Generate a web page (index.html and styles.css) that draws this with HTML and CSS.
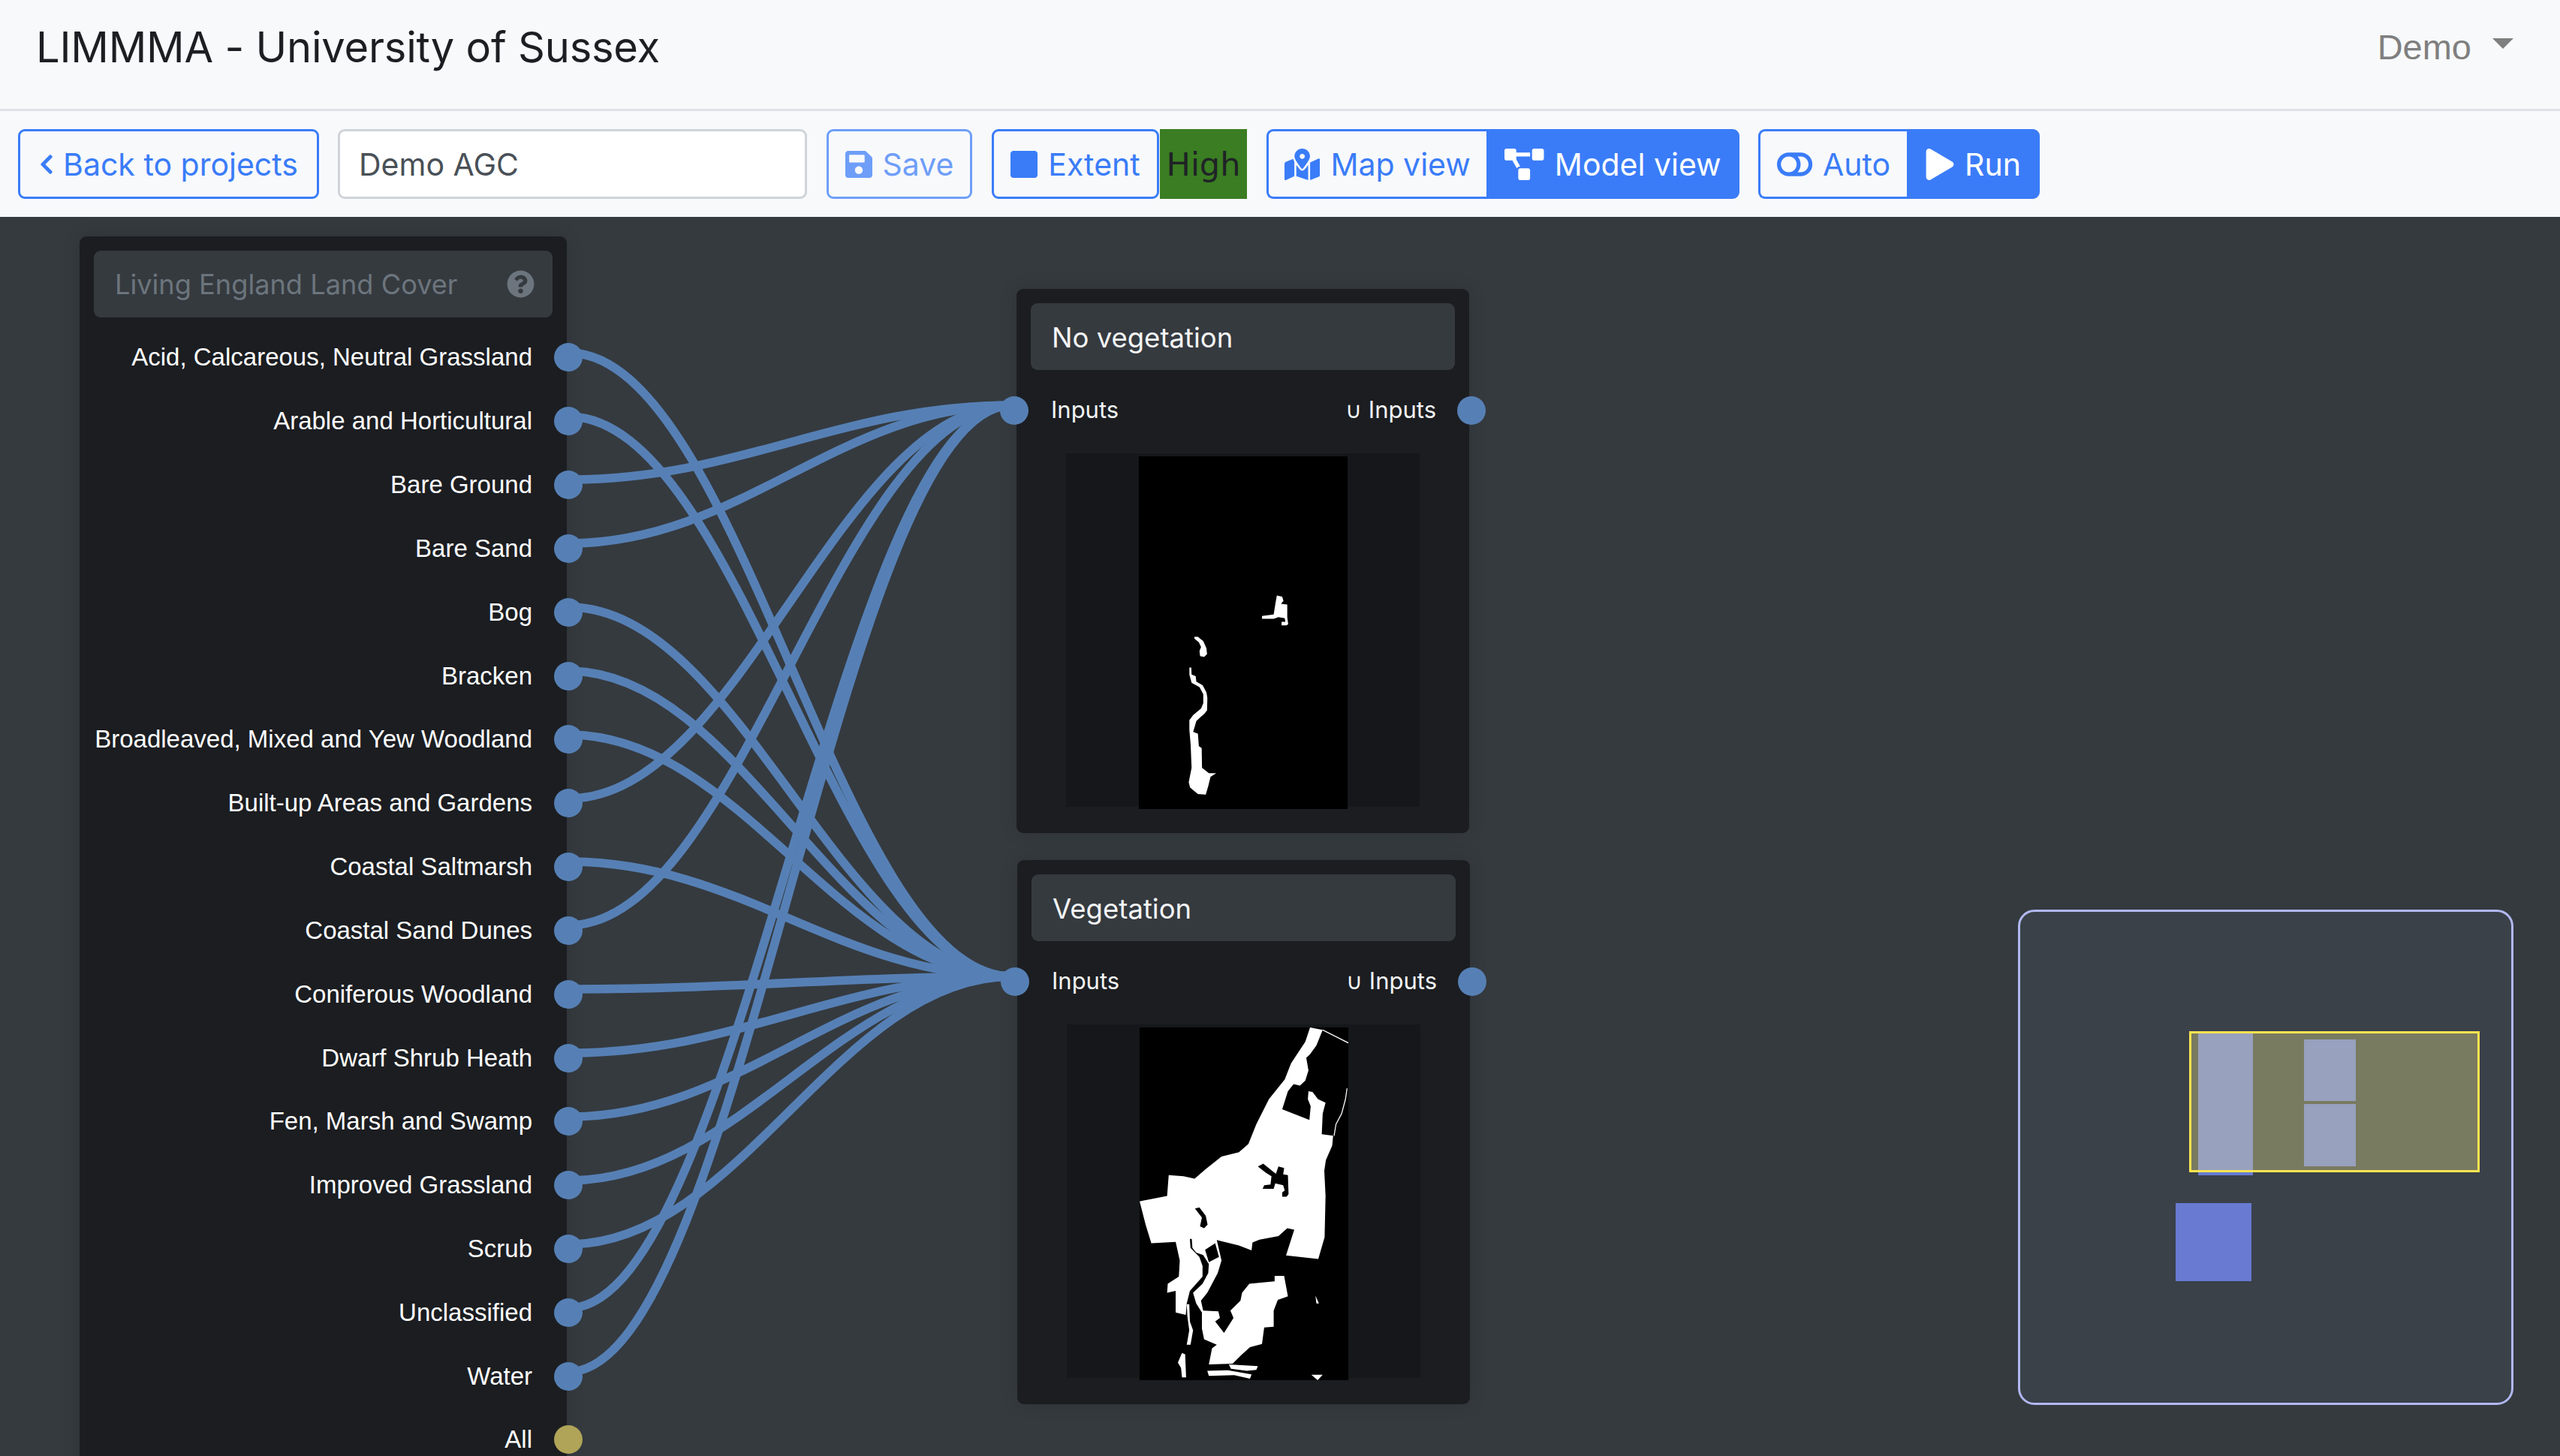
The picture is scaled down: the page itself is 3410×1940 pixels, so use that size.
FILE: index.html
```html
<!DOCTYPE html>
<html lang="en">
<head>
<meta charset="utf-8">
<title>LIMMMA - University of Sussex</title>
<link rel="stylesheet" href="styles.css">
</head>
<body>
<header class="brandbar">
  <div class="brand">LIMMMA - University of Sussex</div>
  <div class="user"><span>Demo</span><i class="caret"></i></div>
</header>
<nav class="toolbar">
  <button class="btn back"><svg class="ic i-chev" viewBox="0 0 320 512"><path d="M34.52 239.03L228.87 44.69c9.37-9.37 24.57-9.37 33.94 0l22.67 22.67c9.36 9.36 9.37 24.52.04 33.9L131.49 256l154.02 154.75c9.34 9.38 9.32 24.54-.04 33.9l-22.67 22.67c-9.37 9.37-24.57 9.37-33.94 0L34.52 272.97c-9.37-9.37-9.37-24.57 0-33.94z"/></svg>Back to projects</button>
  <input class="name" value="Demo AGC">
  <button class="btn save"><svg class="ic i-sq" viewBox="0 0 448 512"><path d="M433.941 129.941l-83.882-83.882A48 48 0 0 0 316.118 32H48C21.49 32 0 53.49 0 80v352c0 26.51 21.49 48 48 48h352c26.51 0 48-21.49 48-48V163.882a48 48 0 0 0-14.059-33.941zM224 416c-35.346 0-64-28.654-64-64 0-35.346 28.654-64 64-64s64 28.654 64 64c0 35.346-28.654 64-64 64zm96-304.52V212c0 6.627-5.373 12-12 12H76c-6.627 0-12-5.373-12-12V108c0-6.627 5.373-12 12-12h228.52c3.183 0 6.235 1.264 8.485 3.515l3.48 3.48A11.996 11.996 0 0 1 320 111.48z"/></svg>Save</button>
  <div class="group extent-group">
    <button class="btn extent"><svg class="ic i-sq" viewBox="0 0 448 512"><path d="M400 32H48C21.5 32 0 53.5 0 80v352c0 26.5 21.5 48 48 48h352c26.5 0 48-21.5 48-48V80c0-26.5-21.5-48-48-48z"/></svg>Extent</button>
    <span class="high">High</span>
  </div>
  <div class="group">
    <button class="btn seg-l mapview"><svg class="ic i-map" viewBox="0 0 576 512"><path d="M288 0c-69.59 0-126 56.41-126 126 0 56.26 82.35 158.8 113.9 196.02 6.39 7.54 17.82 7.54 24.2 0C331.65 284.8 414 182.26 414 126 414 56.41 357.59 0 288 0zm0 168c-23.2 0-42-18.8-42-42s18.8-42 42-42 42 18.8 42 42-18.8 42-42 42zM20.12 215.95A32.006 32.006 0 0 0 0 245.66v250.32c0 11.32 11.43 19.06 21.94 14.86L160 448V214.92c-8.84-15.98-16.07-31.54-21.25-46.42L20.12 215.95zM288 359.67c-14.07 0-27.38-6.18-36.51-16.96-19.66-23.2-40.57-49.62-59.49-76.72V448l192 64V266c-18.92 27.09-39.82 53.52-59.49 76.72-9.13 10.77-22.44 16.95-36.51 16.95zm266.06-198.51L416 224v288l139.88-55.95A31.996 31.996 0 0 0 576 426.34V176.02c0-11.32-11.43-19.06-21.94-14.86z"/></svg>Map view</button>
    <button class="btn seg-r solid modelview"><svg class="ic i-map" viewBox="0 0 640 512"><path d="M384 320H256c-17.67 0-32 14.33-32 32v128c0 17.67 14.33 32 32 32h128c17.67 0 32-14.33 32-32V352c0-17.67-14.33-32-32-32zM192 32c0-17.67-14.33-32-32-32H32C14.33 0 0 14.33 0 32v128c0 17.67 14.33 32 32 32h95.72l73.16 128.04C211.98 300.98 232.4 288 256 288h.28L192 175.51V128h224V64H192V32zM608 0H480c-17.67 0-32 14.33-32 32v128c0 17.67 14.33 32 32 32h128c17.67 0 32-14.33 32-32V32c0-17.67-14.33-32-32-32z"/></svg>Model view</button>
  </div>
  <div class="group">
    <button class="btn seg-l auto"><svg class="ic i-map" viewBox="0 0 576 512"><path d="M384 64H192C85.961 64 0 149.961 0 256s85.961 192 192 192h192c106.039 0 192-85.961 192-192S490.039 64 384 64zM64 256c0-70.741 57.249-128 128-128 70.741 0 128 57.249 128 128 0 70.741-57.249 128-128 128-70.741 0-128-57.249-128-128zm320 128h-48.905c65.217-72.858 65.235-183.102 0-256H384c70.741 0 128 57.249 128 128 0 70.74-57.249 128-128 128z"/></svg>Auto</button>
    <button class="btn seg-r solid run"><svg class="ic i-play" viewBox="0 0 448 512"><path d="M424.4 214.7L72.4 6.6C43.8-10.3 0 6.1 0 47.9V464c0 37.5 40.7 60.1 72.4 41.3l352-208c31.4-18.5 31.5-64.1 0-82.6z"/></svg>Run</button>
  </div>
</nav>
<main class="canvas">
  <svg class="wires" viewBox="0 289 3410 1651">
    <g class="wire-set">
      <path d="M757 639C987 639 1118 540 1348 540"/>
      <path d="M757 724C987 724 1118 540 1348 540"/>
      <path d="M757 1064C987 1064 1118 540 1348 540"/>
      <path d="M757 1233C987 1233 1118 540 1348 540"/>
      <path d="M757 1743C987 1743 1118 540 1348 540"/>
      <path d="M757 1828C987 1828 1118 540 1348 540"/>
      <path d="M757 470C987 470 1118 1301 1348 1301"/>
      <path d="M757 555C987 555 1118 1301 1348 1301"/>
      <path d="M757 809C987 809 1118 1301 1348 1301"/>
      <path d="M757 894C987 894 1118 1301 1348 1301"/>
      <path d="M757 979C987 979 1118 1301 1348 1301"/>
      <path d="M757 1148C987 1148 1118 1301 1348 1301"/>
      <path d="M757 1318C987 1318 1118 1301 1348 1301"/>
      <path d="M757 1403C987 1403 1118 1301 1348 1301"/>
      <path d="M757 1488C987 1488 1118 1301 1348 1301"/>
      <path d="M757 1573C987 1573 1118 1301 1348 1301"/>
      <path d="M757 1658C987 1658 1118 1301 1348 1301"/>
    </g>
  </svg>

  <section class="node source">
    <div class="node-head muted"><span>Living England Land Cover</span>
      <svg class="help" viewBox="0 0 512 512"><path d="M504 256c0 136.997-111.043 248-248 248S8 392.997 8 256C8 119.083 119.043 8 256 8s248 111.083 248 248zM262.655 90c-54.497 0-89.255 22.957-116.549 63.758-3.536 5.286-2.353 12.415 2.715 16.258l34.699 26.31c5.205 3.947 12.621 3.008 16.665-2.122 17.864-22.658 30.113-35.797 57.303-35.797 20.429 0 45.698 13.148 45.698 32.958 0 14.976-12.363 22.667-32.534 33.976C247.128 238.528 216 254.941 216 296v4c0 6.627 5.373 12 12 12h56c6.627 0 12-5.373 12-12v-1.333c0-28.462 83.186-29.647 83.186-106.667 0-58.002-60.165-102-116.531-102zM256 338c-25.365 0-46 20.635-46 46 0 25.364 20.635 46 46 46s46-20.636 46-46c0-25.365-20.635-46-46-46z"/></svg>
    </div>
    <ul class="outs">
      <li>Acid, Calcareous, Neutral Grassland<i class="sock"></i></li>
      <li>Arable and Horticultural<i class="sock"></i></li>
      <li>Bare Ground<i class="sock"></i></li>
      <li>Bare Sand<i class="sock"></i></li>
      <li>Bog<i class="sock"></i></li>
      <li>Bracken<i class="sock"></i></li>
      <li>Broadleaved, Mixed and Yew Woodland<i class="sock"></i></li>
      <li>Built-up Areas and Gardens<i class="sock"></i></li>
      <li>Coastal Saltmarsh<i class="sock"></i></li>
      <li>Coastal Sand Dunes<i class="sock"></i></li>
      <li>Coniferous Woodland<i class="sock"></i></li>
      <li>Dwarf Shrub Heath<i class="sock"></i></li>
      <li>Fen, Marsh and Swamp<i class="sock"></i></li>
      <li>Improved Grassland<i class="sock"></i></li>
      <li>Scrub<i class="sock"></i></li>
      <li>Unclassified<i class="sock"></i></li>
      <li>Water<i class="sock"></i></li>
      <li>All<i class="sock gold"></i></li>
    </ul>
  </section>

  <section class="node op op-a">
    <div class="node-head">No vegetation</div>
    <div class="ports"><i class="sock in"></i><span>Inputs</span><span class="out-label"><b class="union">∪</b> Inputs</span><i class="sock out"></i></div>
    <div class="preview">
      <svg class="mask" viewBox="418 477 661 983" preserveAspectRatio="none">
        <rect x="418" y="477" width="661" height="983" fill="#000"/>
        <g fill="#fff">
          <polygon points="808,922 845,918 850,890 855,865 872,868 876,880 868,888 888,890 888,925 891,945 885,948 870,948 870,938 882,938 880,928 860,925 845,930 808,930"/>
          <polygon points="594,980 605,980 622,992 632,1012 634,1028 625,1036 612,1034 610,1020 615,1008 608,995 594,985"/>
          <polygon points="578,1066 584,1066 585,1085 598,1090 600,1105 620,1115 632,1135 635,1150 634,1185 625,1195 612,1205 600,1215 590,1245 605,1250 608,1285 617,1290 618,1345 640,1360 663,1360 645,1370 638,1395 630,1420 605,1418 580,1400 576,1385 585,1345 582,1280 578,1240 578,1212 590,1198 615,1180 622,1165 622,1140 610,1120 585,1108 578,1085"/>
        </g>
      </svg>
    </div>
  </section>

  <section class="node op op-b">
    <div class="node-head">Vegetation</div>
    <div class="ports"><i class="sock in"></i><span>Inputs</span><span class="out-label"><b class="union">∪</b> Inputs</span><i class="sock out"></i></div>
    <div class="preview">
      <svg class="mask" viewBox="421 500 660 984" preserveAspectRatio="none">
        <rect x="421" y="500" width="660" height="984" fill="#000"/>
        <g fill="#fff">
          <polygon points="960,500 1000,507 980,550 960,575 948,585 955,620 945,648 928,662 908,658 890,678 872,728 958,758 962,720 953,700 955,678 968,680 985,700 1009,710 1000,740 997,798 1033,802 1030,830 1010,870 1005,900 1009,970 1006,1085 986,1146 884,1136 910,1064 888,1060 860,1082 800,1092 778,1100 775,1122 735,1108 665,1093 680,1150 668,1185 635,1240 615,1262 622,1290 670,1292 675,1310 660,1320 688,1352 718,1310 708,1290 740,1262 745,1240 768,1215 848,1208 848,1193 878,1193 890,1250 858,1260 845,1290 845,1335 815,1337 808,1383 770,1392 745,1412 715,1438 640,1440 650,1395 665,1385 625,1370 618,1340 618,1295 600,1270 590,1240 620,1215 638,1185 640,1160 622,1135 600,1128 588,1115 586,1090 580,1090 582,1115 610,1140 620,1165 620,1195 600,1215 580,1235 570,1270 567,1302 535,1295 535,1235 508,1240 510,1215 545,1195 548,1150 535,1098 458,1102 440,1050 421,985 508,970 513,912 560,915 595,922 630,895 680,860 735,848 765,825 790,770 830,700 880,645 900,600 945,540"/>
          <polygon points="570,1272 578,1272 580,1320 590,1345 582,1385 570,1385 578,1345 572,1305"/>
          <polygon points="977,1248 988,1270 980,1270"/>
          <polygon points="964,1469 1000,1469 984,1484"/>
          <polygon points="555,1408 565,1412 568,1476 555,1476 552,1450 542,1435"/>
          <polygon points="635,1458 700,1456 775,1468 770,1480 720,1470 640,1472"/>
          <polygon points="703,1440 795,1445 790,1455 760,1458 710,1452"/>
        </g>
        <g fill="#000">
          <polygon points="795,888 812,880 840,900 852,908 860,888 878,892 875,910 890,912 892,965 886,972 872,972 872,960 880,955 875,940 850,935 845,950 810,950 815,940 835,938 838,915 820,905"/>
          <polygon points="596,1005 610,1002 630,1025 636,1050 625,1060 612,1055 618,1030"/>
          <polygon points="628,1120 660,1102 672,1140 640,1155"/>
        </g>
        <g class="mask-lines">
          <polyline points="1000,507 1081,543"/>
          <polyline points="1077,670 1072,700 1060,740 1042,770 1036,802"/>
        </g>
      </svg>
    </div>
  </section>

  <aside class="minimap">
    <div class="mm-view"></div>
    <div class="mm-block mm-source"></div>
    <div class="mm-block mm-a"></div>
    <div class="mm-block mm-b"></div>
    <div class="mm-block mm-c"></div>
  </aside>
</main>
</body>
</html>
```
FILE: styles.css
```css
* { box-sizing: border-box; }
html, body { margin: 0; height: 100%; }
body {
  width: 3410px; height: 1940px; overflow: hidden;
  display: flex; flex-direction: column;
  font-family: Inter, "Liberation Sans", sans-serif;
  background: #f8f9fb;
  color: #212529;
}
.brandbar {
  height: 148px; flex: none;
  display: flex; align-items: center; justify-content: space-between;
  padding: 0 62px 20px 48px;
  border-bottom: 3px solid #e0e1e7;
}
.brand { font-size: 56px; letter-spacing: -.2px; color: #1c1e21; }
.user { display: flex; align-items: center; gap: 28px; font: 47px "Liberation Sans", sans-serif; color: #7f7f7f; }
.caret { width: 0; height: 0; border: 14px solid transparent; border-top-color: #7f7f7f; border-bottom: 0; margin-bottom: 10px; }

.toolbar { height: 141px; flex: none; display: flex; align-items: flex-start; gap: 25px; padding: 24px 0 0 24px; }
.group { display: flex; }
.extent-group { gap: 1px; margin-right: 1px; }
.btn {
  height: 93px; padding: 0;
  display: flex; align-items: center; justify-content: center; gap: 14px;
  font: 41px Inter, "Liberation Sans", sans-serif;
  color: #3a7cf8; background: transparent;
  border: 3px solid #3a7cf8; border-radius: 9px;
}
.ic { fill: currentColor; height: 42px; flex: none; }
.i-chev { height: 30px; width: 20px; margin-right: -2px; }
.i-sq { width: 36px; }
.i-map { height: 42px; }
.i-play { width: 38px; height: 42px; }
.back { width: 401px; }
.name {
  width: 625px; height: 93px; padding: 0 25px;
  font: 41px Inter, "Liberation Sans", sans-serif; color: #495057;
  background: #fff; border: 3px solid #ced4da; border-radius: 9px;
}
.save { width: 194px; margin: 0 1px; opacity: .72; }
.extent { width: 223px; }
.high {
  width: 116px; height: 93px; display: flex; align-items: center; justify-content: center;
  background: #3a7d22; color: #1f2326; font: 43px "DejaVu Sans", sans-serif;
}
.seg-l { border-radius: 9px 0 0 9px; border-right: 0; }
.seg-r { border-radius: 0 9px 9px 0; }
.solid { background: #3a7cf8; color: #fff; }
.mapview { width: 293px; }
.modelview { width: 337px; }
.auto { width: 198px; }
.run { width: 177px; }

.canvas { position: relative; flex: 1; min-height: 0; background: #353a3f; overflow: hidden; }
.wires { position: absolute; left: 0; top: 0; width: 3410px; height: 1651px; }
.wire-set path { fill: none; stroke: #5680b5; stroke-width: 11.5; }

.node { position: absolute; background: #1b1d21; border-radius: 9px; padding: 19px; box-shadow: 0 0 24px rgba(0,0,0,.12); }
.node-head {
  height: 89px; display: flex; align-items: center; justify-content: space-between;
  padding: 2px 0 0 28px; background: #353a3f; border-radius: 9px;
  font-size: 36.5px; color: #f4f5f6;
}
.source { left: 106px; top: 26px; width: 649px; height: 1700px; }
.muted { color: #6c757d; font-size: 36.2px; padding: 0 24px 0 28px; }
.help { width: 37px; height: 37px; fill: #6c757d; }
.outs { list-style: none; margin: 11px -40px 0 0; padding: 0; }
.outs li {
  height: 84.84px; display: flex; align-items: center; justify-content: flex-end; gap: 29px;
  font: 33px "Liberation Sans", sans-serif; color: #fff; white-space: nowrap;
}
.sock { width: 38px; height: 38px; flex: none; border-radius: 50%; background: #5680b5; }
.gold { background: #b0a458; }

.op { width: 603px; height: 725px; }
.op-a { left: 1354px; top: 96px; }
.op-b { left: 1355px; top: 857px; }
.ports { position: relative; height: 109px; margin-bottom: 2px; display: flex; align-items: center; justify-content: space-between; padding: 0 25px 4px 27px; font-size: 31px; color: #f4f5f6; }
.union { font-weight: 400; font-size: 30px; margin-right: 0; }
.sock.in, .sock.out { position: absolute; top: 35px; }
.sock.in { left: -41px; }
.sock.out { right: -41px; }
.preview { width: 471px; height: 471px; margin-left: 47px; background: #15171a; display: flex; justify-content: center; }
.mask { width: 278px; height: 470px; margin-top: 4px; flex: none; }
.mask-lines polyline { fill: none; stroke: #fff; stroke-width: 3; }

.minimap { position: absolute; left: 2688px; top: 923px; width: 660px; height: 660px; background: #3a4149; border: 3px solid #b1b8f0; border-radius: 22px; }
.mm-block { position: absolute; background: rgba(104,122,210,1); }
.mm-view { position: absolute; left: 225px; top: 159px; width: 387px; height: 188px; background: rgba(255,245,145,.32); border: 3px solid #ffe450; z-index: 2; }
.mm-source { left: 237px; top: 159px; width: 73px; height: 192px; }
.mm-a { left: 378px; top: 170px; width: 69px; height: 82px; }
.mm-b { left: 378px; top: 256px; width: 69px; height: 83px; }
.mm-c { left: 207px; top: 388px; width: 101px; height: 104px; }
```
